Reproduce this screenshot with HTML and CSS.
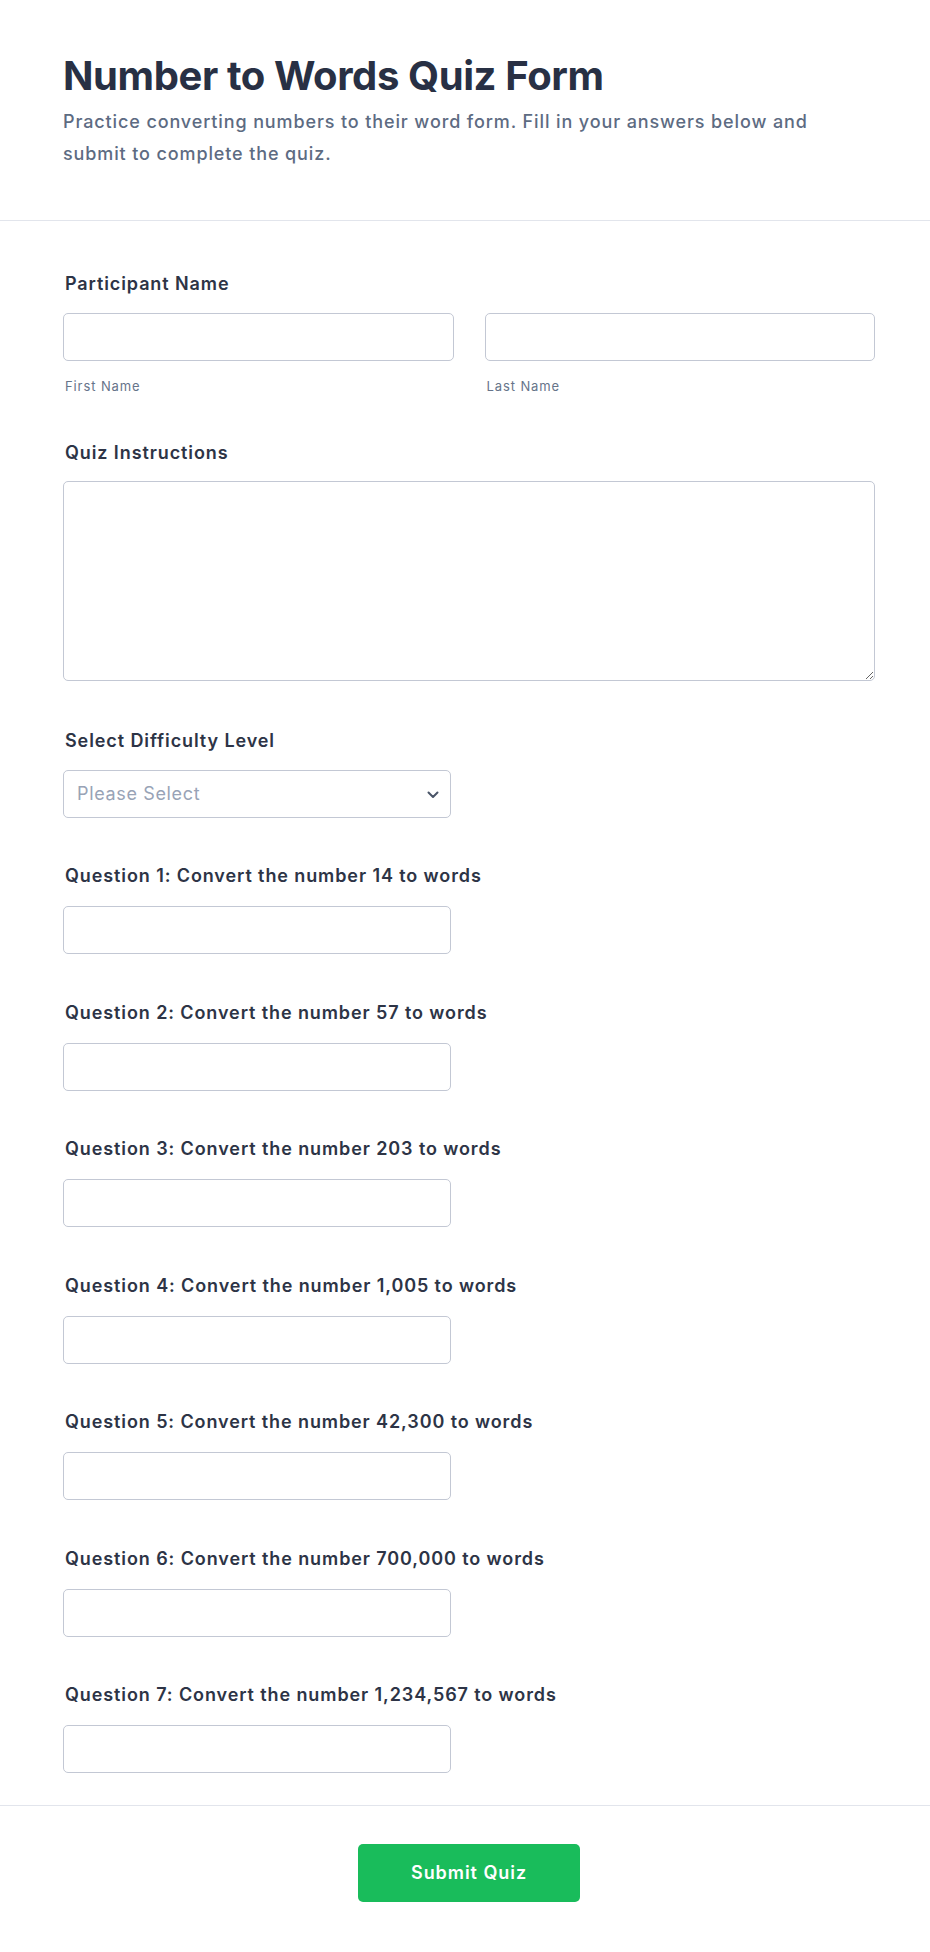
FILE: index.html
```html
<!DOCTYPE html>
<html lang="en">
<head>
<meta charset="utf-8">
<title>Number to Words Quiz Form</title>
<link rel="stylesheet" href="styles.css">
</head>
<body>
<div class="page">
  <header class="header">
    <h1 class="title">Number to Words Quiz Form</h1>
    <p class="subtitle">Practice converting numbers to their word form. Fill in your answers below and submit to complete the quiz.</p>
  </header>
  <form class="form">
    <div class="field field-name">
      <label class="label">Participant Name</label>
      <div class="name-grid">
        <div class="name-col">
          <input class="input" type="text">
          <span class="sublabel">First Name</span>
        </div>
        <div class="name-col">
          <input class="input" type="text">
          <span class="sublabel">Last Name</span>
        </div>
      </div>
    </div>
    <div class="field">
      <label class="label">Quiz Instructions</label>
      <textarea class="textarea"></textarea>
    </div>
    <div class="field field-select">
      <label class="label">Select Difficulty Level</label>
      <div class="select-wrap">
        <select class="select">
          <option>Please Select</option>
        </select>
        <svg class="chevron" width="12" height="8" viewBox="0 0 12 8"><path d="M1.5 1.5 L6 6 L10.5 1.5" fill="none" stroke="#4a5568" stroke-width="2" stroke-linecap="round" stroke-linejoin="round"/></svg>
      </div>
    </div>
    <div class="field field-q">
      <label class="label">Question 1: Convert the number 14 to words</label>
      <input class="input input-half" type="text">
    </div>
    <div class="field field-q">
      <label class="label">Question 2: Convert the number 57 to words</label>
      <input class="input input-half" type="text">
    </div>
    <div class="field field-q">
      <label class="label">Question 3: Convert the number 203 to words</label>
      <input class="input input-half" type="text">
    </div>
    <div class="field field-q">
      <label class="label">Question 4: Convert the number 1,005 to words</label>
      <input class="input input-half" type="text">
    </div>
    <div class="field field-q">
      <label class="label">Question 5: Convert the number 42,300 to words</label>
      <input class="input input-half" type="text">
    </div>
    <div class="field field-q">
      <label class="label">Question 6: Convert the number 700,000 to words</label>
      <input class="input input-half" type="text">
    </div>
    <div class="field field-q">
      <label class="label">Question 7: Convert the number 1,234,567 to words</label>
      <input class="input input-half" type="text">
    </div>
  </form>
  <footer class="footer">
    <button class="submit" type="button">Submit Quiz</button>
  </footer>
</div>
</body>
</html>
```
FILE: styles.css
```css
* { box-sizing: border-box; }
html, body { margin: 0; padding: 0; background: #ffffff; }
body {
  font-family: Inter, "Noto Sans", "Liberation Sans", sans-serif;
  color: #2d3446;
}
.page { width: 930px; }
.header {
  padding: 52px 63px 50px 63px;
  border-bottom: 1px solid #e2e5ec;
}
.title {
  margin: 0;
  font-size: 40px;
  line-height: 48px;
  font-weight: 700;
  color: #283044;
  letter-spacing: -0.4px;
}
.subtitle {
  margin: 6px 0 0;
  font-size: 18px;
  line-height: 32px;
  font-weight: 500;
  color: #5d6b82;
  letter-spacing: 0.88px;
}
.form {
  padding: 27px 55px 9px 63px;
  display: flex;
  flex-direction: column;
}
.field {
  padding: 24px 0;
  display: flex;
  flex-direction: column;
  align-items: flex-start;
}
.field-name { padding-bottom: 19px; }
.field-select { padding-bottom: 22.5px; }
.field-q { padding-bottom: 22.5px; }
.label {
  display: block;
  padding-left: 2px;
  font-size: 18px;
  line-height: 24px;
  font-weight: 600;
  color: #2d3446;
  letter-spacing: 0.9px;
  margin-bottom: 16.5px;
}
.field-q .label { margin-bottom: 18px; }
.name-grid {
  width: 100%;
  display: grid;
  grid-template-columns: 1fr 1fr;
  column-gap: 31px;
}
.name-col { display: flex; flex-direction: column; }
.sublabel {
  display: block;
  margin-top: 13px;
  padding-left: 2px;
  font-size: 13px;
  line-height: 24px;
  color: #66748a;
  letter-spacing: 0.9px;
}
.input, .textarea, .select {
  font-family: inherit;
  border: 1px solid #c3c8d4;
  border-radius: 5px;
  background: #ffffff;
  outline: none;
}
.input { width: 100%; height: 48px; padding: 0 14px; font-size: 18px; }
.input-half { width: 388px; }
.textarea {
  width: 100%;
  height: 200px;
  resize: vertical;
  padding: 12px 14px;
  font-size: 18px;
}
.select-wrap { position: relative; width: 388px; }
.select {
  width: 100%;
  height: 48px;
  -webkit-appearance: none;
  appearance: none;
  padding: 0 40px 0 13px;
  font-size: 18px;
  letter-spacing: 0.65px;
  color: #98a3b6;
}
.chevron {
  position: absolute;
  right: 12px;
  top: 21px;
  pointer-events: none;
}
.footer {
  border-top: 1px solid #e2e5ec;
  padding: 38px 55px 51px 63px;
  display: flex;
  justify-content: center;
}
.submit {
  width: 222px;
  height: 58px;
  border: none;
  border-radius: 5px;
  background: #19bc5b;
  color: #ffffff;
  font-family: inherit;
  font-size: 18px;
  font-weight: 600;
  letter-spacing: 0.95px;
  cursor: pointer;
}
```
